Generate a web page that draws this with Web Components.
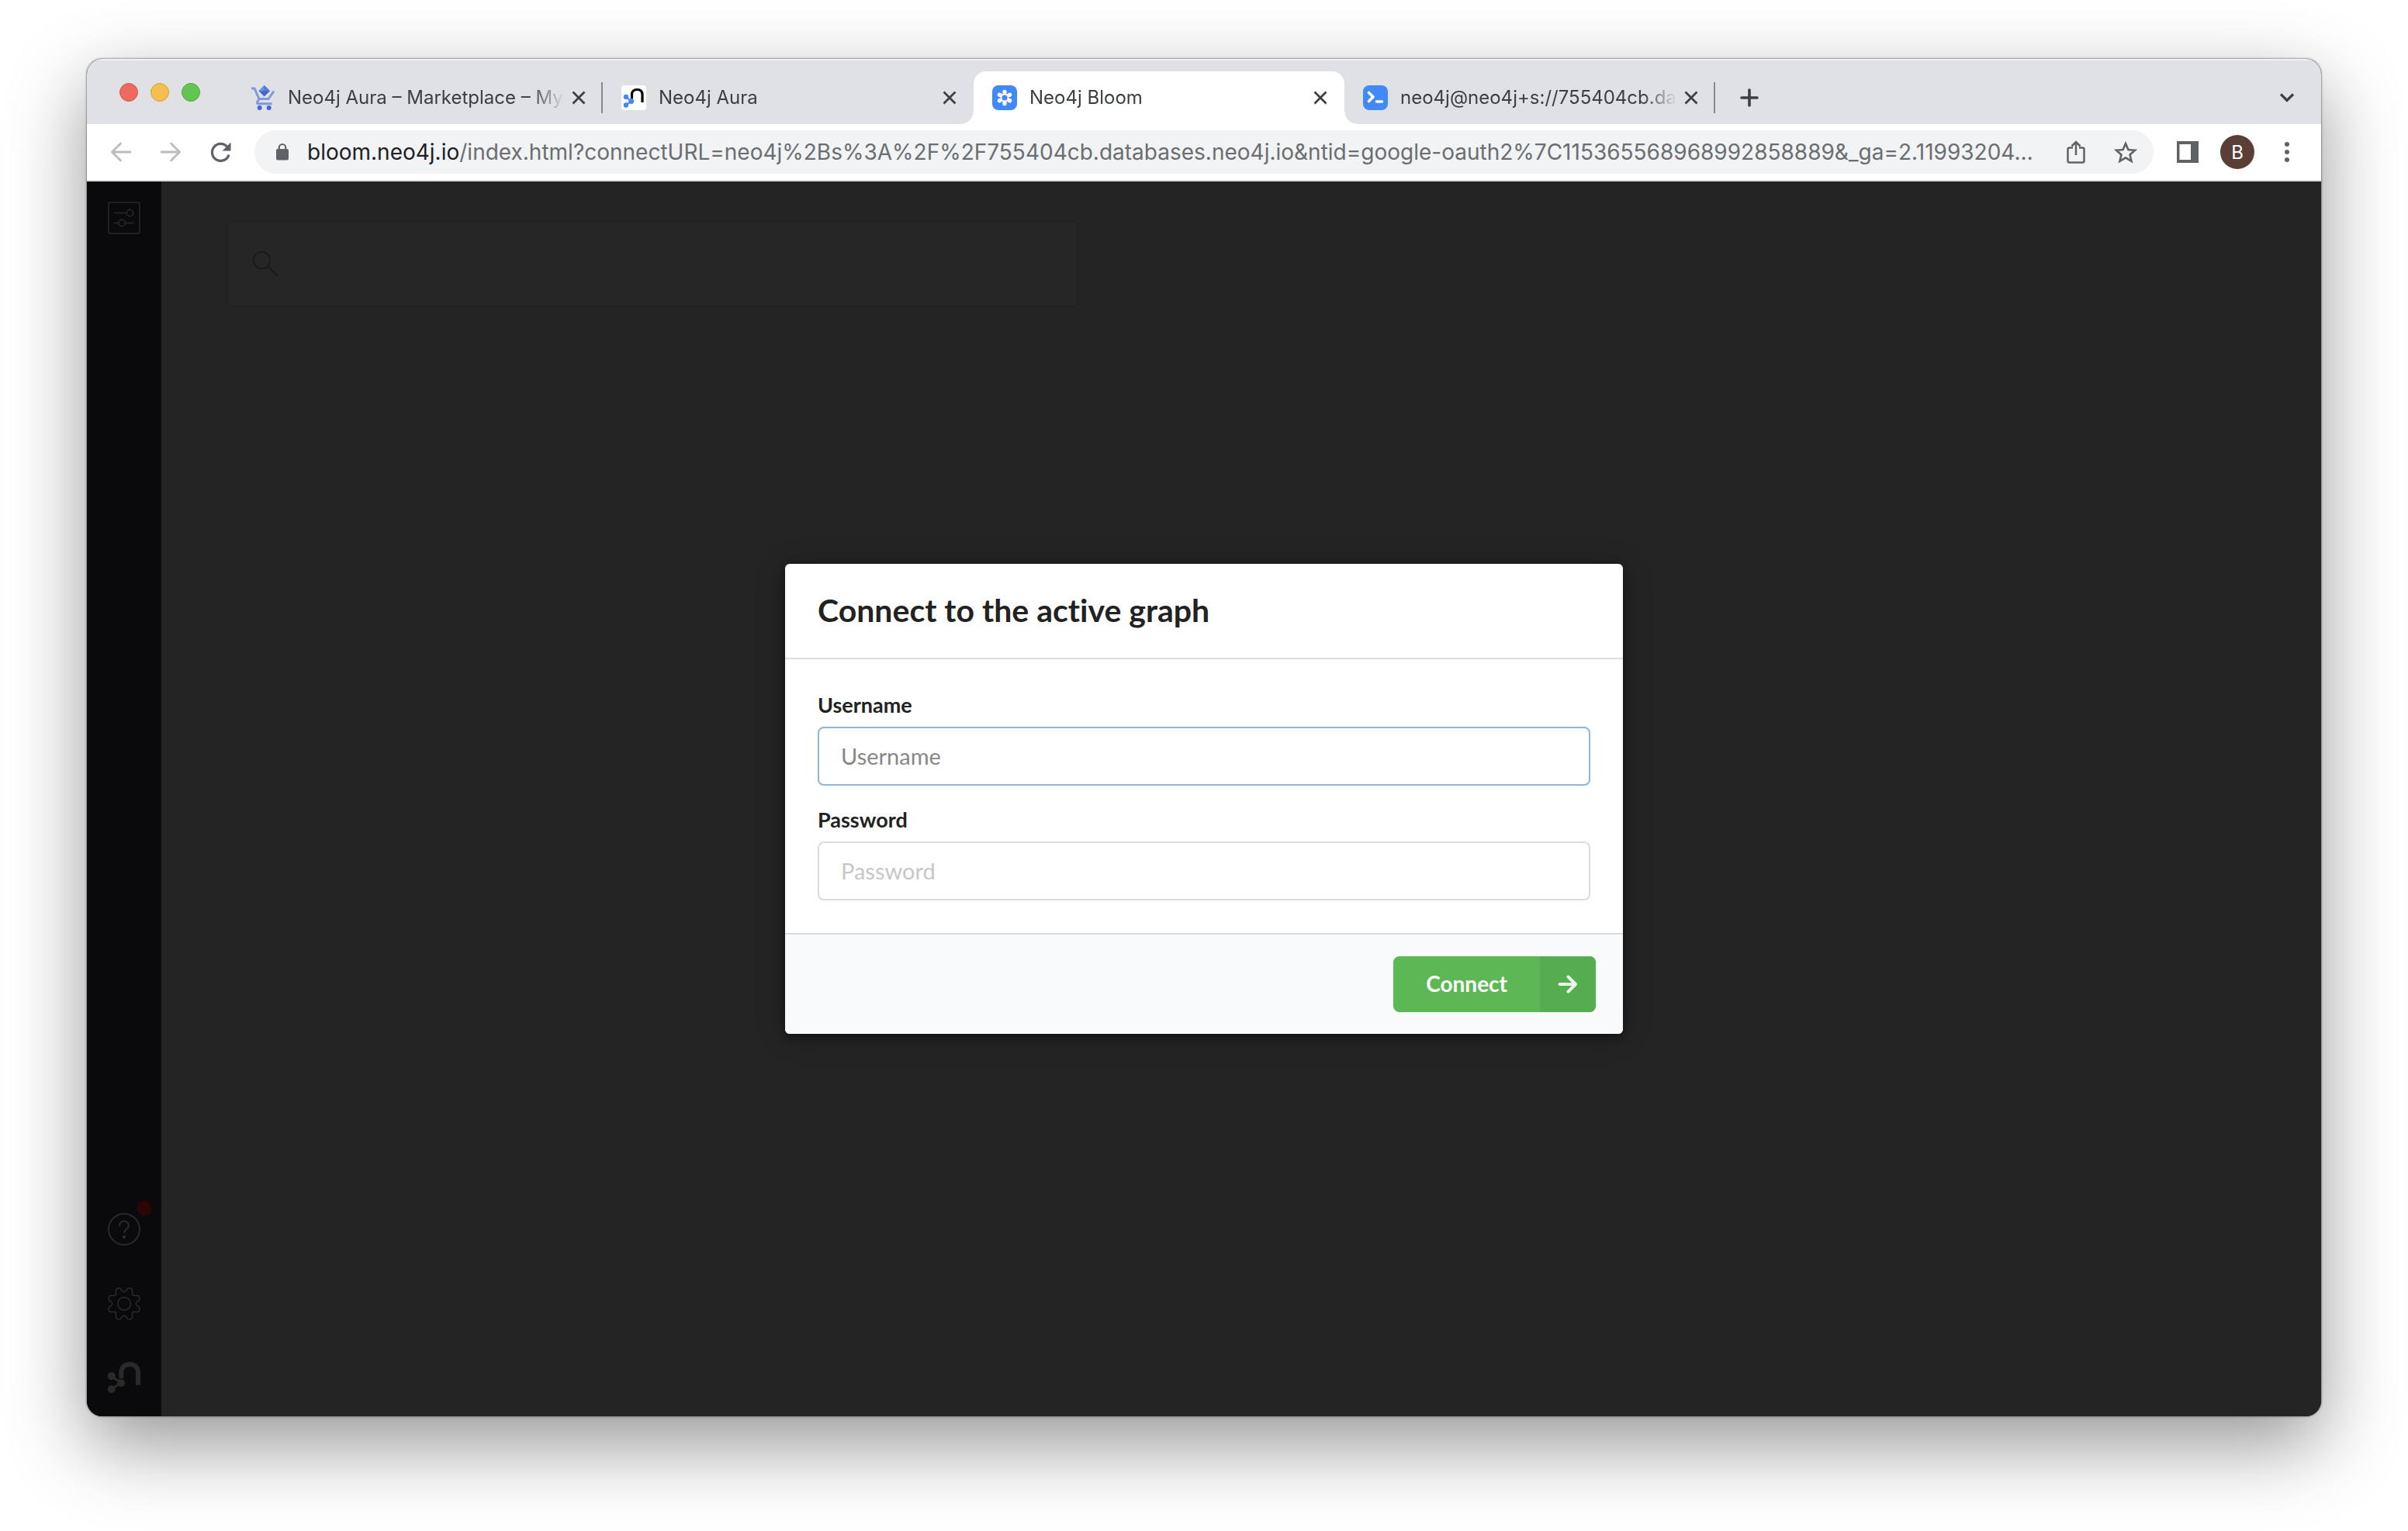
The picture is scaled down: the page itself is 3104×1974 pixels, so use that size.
<!DOCTYPE html>
<html lang="en">
<head>
<meta charset="utf-8">
<title>Neo4j Bloom</title>
<style>
  html, body { margin: 0; height: 100%; background: #fff; }
  body { display: flex; box-sizing: border-box; min-height: 100vh; padding: 76px 112px 148px; font-family: Inter, "Liberation Sans", sans-serif; }
</style>
</head>
<body>
<browser-window>
  <tab-strip slot="tabs">
    <browser-tab divided label="Neo4j Aura – Marketplace – My">
      <svg slot="icon" width="32" height="32" viewBox="0 0 32 32" fill="none">
        <path d="M1 4h4l6 13.500h12L30 7.500M11 17.500l-2.500 4.500q-.5 1.700 1.500 1.700h17.500" stroke="#8199dc" stroke-width="3"/>
        <circle cx="11.700" cy="29" r="3" fill="#4067d4"/><circle cx="23.700" cy="29" r="3" fill="#4067d4"/>
        <path d="M17.700 0L25 7.300 17.700 14.600 10.500 7.300z" fill="#4067d4"/>
        <path d="M17.700 0v7.300h-7.200z" fill="#7590dc"/><path d="M17.700 0v7.300H25z" fill="#587ad8"/>
      </svg>
    </browser-tab>
    <browser-tab label="Neo4j Aura">
      <svg slot="icon" width="32" height="32" viewBox="0 0 32 32" fill="none">
        <rect width="32" height="32" rx="4" fill="#fff"/>
        <path d="M13.500 17.500V12c0-4.300 2.500-6.500 6.700-6.500S27 7.700 27 12v10" stroke="#000" stroke-width="3.200"/>
        <path d="M6 15l6.500 5.400L6 25.500" stroke="#4089f7" stroke-width="2"/>
        <g fill="#4089f7"><circle cx="6" cy="15" r="3.200"/><circle cx="12.700" cy="20.400" r="3.500"/><circle cx="6" cy="25.500" r="3.200"/></g>
      </svg>
    </browser-tab>
    <browser-tab active label="Neo4j Bloom">
      <svg slot="icon" width="32" height="32" viewBox="0 0 32 32" fill="none">
        <rect width="32" height="32" rx="8" fill="#4089f7"/>
        <circle cx="16" cy="16" r="4.600" stroke="#fff" stroke-width="2"/>
        <g fill="#fff"><ellipse cx="16" cy="8.800" rx="2.700" ry="3.100"/><ellipse cx="16" cy="8.800" rx="2.700" ry="3.100" transform="rotate(60 16 16)"/><ellipse cx="16" cy="8.800" rx="2.700" ry="3.100" transform="rotate(120 16 16)"/><ellipse cx="16" cy="8.800" rx="2.700" ry="3.100" transform="rotate(180 16 16)"/><ellipse cx="16" cy="8.800" rx="2.700" ry="3.100" transform="rotate(240 16 16)"/><ellipse cx="16" cy="8.800" rx="2.700" ry="3.100" transform="rotate(300 16 16)"/></g>
      </svg>
    </browser-tab>
    <browser-tab divided label="neo4j@neo4j+s://755404cb.da">
      <svg slot="icon" width="32" height="32" viewBox="0 0 32 32" fill="none" stroke="#fff" stroke-width="3.600" stroke-linecap="round" stroke-linejoin="round">
        <rect width="32" height="32" rx="8" fill="#4089f7" stroke="none"/>
        <path d="M7.500 9.500l5.500 5.500-5.500 5.500M17.500 21h7"/>
      </svg>
    </browser-tab>
  </tab-strip>
  <browser-toolbar slot="toolbar" host="bloom.neo4j.io" path="/index.html?connectURL=neo4j%2Bs%3A%2F%2F755404cb.databases.neo4j.io&amp;ntid=google-oauth2%7C115365568968992858889&amp;_ga=2.11993204…"></browser-toolbar>
  <bloom-app>
    <connect-dialog heading="Connect to the active graph">
      <form-field label="Username" type="text" highlighted></form-field>
      <form-field label="Password" type="password"></form-field>
    </connect-dialog>
  </bloom-app>
</browser-window>

<script>
const define = (name, html, setup) => customElements.define(name, class extends HTMLElement {
  constructor() {
    super();
    this.attachShadow({ mode: 'open' }).innerHTML = html;
  }
  connectedCallback() { if (setup) setup(this, this.shadowRoot); }
});

const BUTTON = `button { display: grid; place-items: center; flex: none; padding: 0; border: 0; background: none; font: inherit; color: inherit; }
  svg { display: block; overflow: visible; }`;

define('browser-window', `<style>
  :host { display: flex; flex-direction: column; flex: 1; min-width: 0; border-radius: 20px; overflow: hidden; background: #242424;
    box-shadow: 0 0 2px 1px rgba(0,0,0,.35), 0 36px 100px rgba(0,0,0,.42); }
  ::slotted(bloom-app) { flex: 1; }
</style><slot name="tabs"></slot><slot name="toolbar"></slot><slot></slot>`);

define('tab-strip', `<style>
  :host { display: flex; height: 84px; background: #dfe1e5; color: #3c4043; box-shadow: inset 0 2px 1px rgba(255,255,255,.6); }
  .lights { display: flex; align-items: center; gap: 16px; padding: 2px 41px 0 42px; }
  .lights i { width: 22px; height: 22px; border-radius: 50%; border: 1px solid #d5564a; background: #ed6a5e; }
  .lights i:nth-child(2) { background: #f5bf4f; border-color: #d8a03b; }
  .lights i:nth-child(3) { background: #61c554; border-color: #50a73f; }
  .row { display: flex; flex: 1; min-width: 0; align-items: center; align-self: flex-end; height: 68px; padding-right: 28px; }
  ${BUTTON}
  button { width: 32px; height: 32px; }
  .new { margin-left: 28px; }
  .search { margin-left: auto; }
</style>
<div class="lights"><i></i><i></i><i></i></div>
<div class="row"><slot></slot>
  <button class="new" aria-label="New tab"><svg width="24" height="24" viewBox="0 0 24 24" stroke="#3c4043" stroke-width="3.600" stroke-linecap="round"><path d="M12 2v20M2 12h20"/></svg></button>
  <button class="search" aria-label="Search tabs"><svg width="20" height="12" viewBox="0 0 20 12" fill="none" stroke="#3c4043" stroke-width="3.200"><path d="M2 1.500l8 8 8-8"/></svg></button>
</div>`);

define('browser-tab', `<style>
  :host { display: flex; align-items: center; box-sizing: border-box; flex: 0 1 478px; min-width: 0; height: 68px; padding-left: 24px; position: relative; }
  :host([active]) { background: #fff; border-radius: 16px 16px 0 0; }
  :host([active])::before, :host([active])::after { content: ""; position: absolute; bottom: 0; width: 16px; height: 16px; }
  :host([active])::before { right: 100%; background: radial-gradient(circle at 0 0, transparent 15px, #fff 16px); }
  :host([active])::after { left: 100%; background: radial-gradient(circle at 100% 0, transparent 15px, #fff 16px); }
  .title { flex: 1; min-width: 0; margin: 0 2px 0 16px; overflow: hidden; white-space: nowrap; font-size: 24px; line-height: 32px;
    -webkit-mask-image: linear-gradient(to left, transparent, #000 44px); mask-image: linear-gradient(to left, transparent, #000 44px); }
  ${BUTTON}
  button { width: 32px; height: 32px; margin-right: 13px; }
  .divider { width: 2px; height: 40px; }
  :host([divided]) .divider { background: #85888c; }
</style>
<slot name="icon"></slot><span class="title"></span>
<button aria-label="Close tab"><svg width="18" height="18" viewBox="0 0 18 18" stroke="#3c4043" stroke-width="2.800"><path d="M1.500 1.500l15 15M16.500 1.500l-15 15"/></svg></button>
<span class="divider"></span>`, (el, root) => { root.querySelector('.title').textContent = el.getAttribute('label'); });

define('browser-toolbar', `<style>
  :host { display: flex; align-items: center; gap: 24px; height: 72px; padding: 0 24px; background: #fff; border-bottom: 2px solid #dcdede; color: #5f6368; }
  ${BUTTON}
  button { width: 40px; height: 40px; }
  .omni { display: flex; align-items: center; flex: 1; min-width: 0; box-sizing: border-box; height: 56px; padding: 0 16px 0 20px; border-radius: 28px; background: #f1f3f4; }
  .lock { width: 32px; height: 32px; }
  .url { flex: 1; min-width: 0; margin: 0 8px 0 16px; overflow: hidden; white-space: nowrap; font-size: 28px; line-height: 40px; color: #6b6e71; }
  .host { color: #202124; }
  .omni button + button { margin-left: 24px; }
  .group { display: flex; align-items: center; gap: 22px; }
  .avatar { width: 44px; height: 44px; border-radius: 50%; background: #5b3f37; color: #fff; font-size: 24px; }
</style>
<button aria-label="Back" disabled><svg width="26" height="26" viewBox="0 0 26 26" fill="none" stroke="#babcbe" stroke-width="2.800" stroke-linecap="round" stroke-linejoin="round"><path d="M25 13H1.500M12.500 2l-11 11 11 11"/></svg></button>
<button aria-label="Forward" disabled><svg width="26" height="26" viewBox="0 0 26 26" fill="none" stroke="#babcbe" stroke-width="2.800" stroke-linecap="round" stroke-linejoin="round"><path d="M1 13h23.500M13.500 2l11 11-11 11"/></svg></button>
<button aria-label="Reload"><svg width="28" height="28" viewBox="0 0 28 28" fill="none"><path d="M23 7.500A11 11 0 1 0 25 17.500" stroke="#5f6368" stroke-width="3.200"/><path d="M27.500 1.500v11h-11z" fill="#5f6368"/></svg></button>
<div class="omni">
  <button class="lock" aria-label="View site information"><svg width="18" height="22" viewBox="0 0 18 22" fill="none"><rect x="1" y="7" width="16" height="14.500" rx="2" fill="#5f6368"/><path d="M4.800 8V5.200a4.200 4.200 0 0 1 8.400 0V8" stroke="#5f6368" stroke-width="2.200"/></svg></button>
  <div class="url" role="textbox" contenteditable="plaintext-only" spellcheck="false" aria-label="Address and search bar"><span class="host"></span><span class="path"></span></div>
  <button aria-label="Share"><svg width="24" height="30" viewBox="0 0 24 30" fill="none" stroke="#5f6368" stroke-width="2.500"><path d="M8 9.500H3.500q-2 0-2 2v15q0 2 2 2h17q2 0 2-2v-15q0-2-2-2H16M12 19V2.500M6.500 7.500L12 2l5.500 5.500"/></svg></button>
  <button aria-label="Bookmark this tab"><svg width="30" height="28" viewBox="0 0 30 28" fill="none" stroke="#5f6368" stroke-width="2.600"><path d="M15 3l3.400 8 8.600.7-6.500 5.700 2 8.400L15 21.300l-7.500 4.500 2-8.400L3 11.700l8.600-.7z"/></svg></button>
</div>
<div class="group">
  <button aria-label="Side panel"><svg width="28" height="28" viewBox="0 0 28 28"><path d="M0 0h28v28H0zM3.500 4v20H18V4z" fill="#5f6368" fill-rule="evenodd"/></svg></button>
  <button class="avatar" aria-label="Profile">B</button>
  <button aria-label="Menu"><svg width="6" height="26" viewBox="0 0 6 26" fill="#5f6368"><circle cx="3" cy="3" r="3"/><circle cx="3" cy="13" r="3"/><circle cx="3" cy="23" r="3"/></svg></button>
</div>`, (el, root) => {
  root.querySelector('.host').textContent = el.getAttribute('host');
  root.querySelector('.path').textContent = el.getAttribute('path');
});

define('bloom-app', `<style>
  :host { display: flex; position: relative; background: #242424; }
  main { flex: 1; padding: 50px 84px; }
  .veil { position: absolute; inset: 0; display: grid; place-items: center; }
</style>
<side-rail></side-rail>
<main><scene-search></scene-search></main>
<div class="veil"><slot></slot></div>`);

define('side-rail', `<style>
  :host { display: flex; flex-direction: column; align-items: center; gap: 54px; box-sizing: border-box; width: 96px; padding: 26px 0 28px; background: #0a0a0c; color: #2a2a2a; }
  ${BUTTON}
  button { width: 42px; height: 42px; position: relative; }
  .push { margin-top: auto; }
  .dot { position: absolute; right: -15px; top: -16px; width: 20px; height: 20px; border-radius: 50%; background: #2a0604; }
  svg { fill: none; stroke: currentColor; stroke-width: 1.500; }
</style>
<button aria-label="Perspective"><svg width="42" height="42" viewBox="0 0 42 42"><rect x="1" y="1" width="40" height="40" rx="2"/><path d="M8 14.500h16M8 27.500h6M22 27.500h11.500"/><circle cx="28.500" cy="14.500" r="4.300"/><circle cx="18" cy="27.500" r="4.300"/></svg></button>
<button class="push" aria-label="Help"><svg width="42" height="42" viewBox="0 0 42 42" style="stroke-width:2"><circle cx="21" cy="21" r="20"/><path d="M15 17c0-4 2.500-6.500 6-6.500s5.800 2.300 5.800 5.700c0 5-6 4.800-6 9.800"/><circle cx="21" cy="31" r="1.200" fill="currentColor"/></svg><span class="dot"></span></button>
<button aria-label="Settings"><svg width="42" height="42" viewBox="-21 -21 42 42"><circle r="8.300"/></svg></button>
<button aria-label="About Neo4j"><svg width="42" height="42" viewBox="0 0 42 42"><path d="M17.300 21V14C17.300 7 22 3 28.200 3S39 7 39 14v15.700" stroke-width="6"/><path d="M4.700 18.300L17 27 4.700 35.300" stroke-width="3"/><g fill="currentColor" stroke="none"><circle cx="4.700" cy="18.300" r="5"/><circle cx="17" cy="27" r="5"/><circle cx="4.700" cy="35.300" r="5"/></g></svg></button>`, (el, root) => {
  // The cog outline is one quarter, turned four times.
  const cog = root.querySelector('circle[r="8.300"]').parentNode;
  for (let turn = 0; turn < 360; turn += 90) {
    const p = document.createElementNS('http://www.w3.org/2000/svg', 'path');
    p.setAttribute('d', 'M0-15.300Q1.500-15.300 3-17.300L4-19Q5.500-20.700 8-20 10.500-19.200 10.500-17V-13Q10.500-10.500 13-10.500H17Q19.200-10.500 20-8 20.700-5.500 19-4L17.300-3Q15.300-1.500 15.300 0');
    p.setAttribute('transform', `rotate(${turn})`);
    cog.append(p);
  }
});

define('scene-search', `<style>
  :host { display: block; max-width: 1098px; }
  label { display: flex; align-items: center; box-sizing: border-box; height: 112px; padding: 0 32px; border: 2px solid #222; border-radius: 4px; background: #262626; }
  input { flex: 1; min-width: 0; margin-left: 24px; border: 0; outline: 0; background: none; color: #555; font: 28px Lato, sans-serif; }
</style>
<label><svg width="32" height="32" viewBox="0 0 32 32" fill="none" stroke="#15191f" stroke-width="1.600"><circle cx="11.500" cy="11.500" r="10.700"/><path d="M19 19l12.500 12.500"/></svg><input type="search" aria-label="Search graph"></label>`);

define('connect-dialog', `<style>
  :host { display: block; width: 1080px; max-width: 90%; border-radius: 6px; overflow: hidden; background: #fff; color: #222;
    font-family: Lato, "Open Sans", sans-serif; font-variant-ligatures: none; box-shadow: 0 4px 12px rgba(0,0,0,.4), 0 4px 40px rgba(0,0,0,.2); }
  h1 { margin: 0; padding: 36px 42px 37px; border-bottom: 2px solid #dcdcdc; font-size: 41px; line-height: 48px; font-weight: 700; }
  .fields { display: flex; flex-direction: column; gap: 28px; padding: 43px 42px 42px; }
  footer { display: flex; justify-content: flex-end; padding: 28px 35px; border-top: 2px solid #dadbdc; background: #f8fafc; }
  button { display: flex; align-items: stretch; height: 72px; padding: 0; border: 0; border-radius: 8px; overflow: hidden; background: #5bb855; color: #fff; font: inherit; font-size: 28px; font-weight: 700; }
  .text { padding: 0 42px; line-height: 70px; }
  .arrow { display: grid; place-items: center; width: 72px; background: #56ad50; }
</style>
<form role="dialog" aria-labelledby="t">
<h1 id="t"></h1>
<div class="fields"><slot></slot></div>
<footer><button type="button"><span class="text">Connect</span><span class="arrow"><svg width="26" height="24" viewBox="0 0 26 24" fill="none" stroke="#eaf5e9" stroke-width="4" stroke-linecap="round" stroke-linejoin="round"><path d="M2.500 12h20M13.500 2.500L23 12l-9.500 9.500"/></svg></span></button></footer>
</form>`, (el, root) => { root.querySelector('h1').textContent = el.getAttribute('heading'); });

define('form-field', `<style>
  :host { display: flex; flex-direction: column; gap: 12px; }
  label { font-size: 27px; line-height: 32px; font-weight: 700; }
  input { box-sizing: border-box; width: 100%; height: 76px; padding: 0 28px 2px; border: 2px solid #dcdcdc; border-radius: 8px; outline: 0; background: #fff; color: #222; font: inherit; font-size: 29px; }
  input::placeholder { color: #c7c7c7; opacity: 1; }
  :host([highlighted]) input { border-color: #8db5d5; }
  :host([highlighted]) input::placeholder { color: #878787; }
</style><label for="f"></label><input id="f">`, (el, root) => {
  const input = root.querySelector('input');
  input.type = el.getAttribute('type');
  input.placeholder = root.querySelector('label').textContent = el.getAttribute('label');
});
</script>
</body>
</html>
